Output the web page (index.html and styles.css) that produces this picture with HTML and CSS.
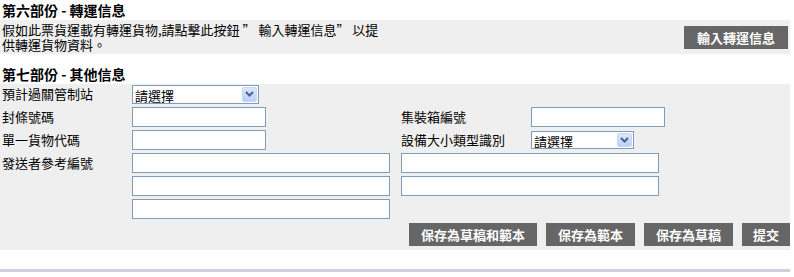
FILE: index.html
```html
<!DOCTYPE HTML>
<html lang="zh-Hant">
<head>
<meta name="viewport" content="width=device-width, initial-scale=1">
<title>其他信息</title>
<link rel="stylesheet" href="styles.css">
</head>
<body>

<div class="page">
  <h2 class="part-title">第六部份 - 轉運信息</h2>
  <div class="panel transit">
    <p class="transit-note">假如此票貨運載有轉運貨物,請點擊此按鈕 ” 輸入轉運信息” 以提供轉運貨物資料。</p>
    <button class="btn btn-transit">輸入轉運信息</button>
  </div>

  <h2 class="part-title spaced">第七部份 - 其他信息</h2>
  <div class="panel other">
    <div class="form-grid">
      <label class="lbl">預計過關管制站</label>
      <span class="pick-wrap pick-office">
        <select class="pick"><option>請選擇</option></select>
        <span class="pick-arrow"><svg width="9" height="6" viewBox="0 0 9 6"><path d="M1 1 L4.5 4.5 L8 1" fill="none" stroke="#4d6185" stroke-width="2"/></svg></span>
      </span>

      <label class="lbl">封條號碼</label>
      <input class="field" type="text">
      <label class="lbl col-3">集裝箱編號</label>
      <input class="field col-4" type="text">

      <label class="lbl">單一貨物代碼</label>
      <input class="field" type="text">
      <label class="lbl col-3">設備大小類型識別</label>
      <span class="pick-wrap pick-size">
        <select class="pick"><option>請選擇</option></select>
        <span class="pick-arrow"><svg width="9" height="6" viewBox="0 0 9 6"><path d="M1 1 L4.5 4.5 L8 1" fill="none" stroke="#4d6185" stroke-width="2"/></svg></span>
      </span>

      <label class="lbl">發送者參考編號</label>
      <input class="field field-wide" type="text">
      <input class="field field-wide col-34" type="text">

      <input class="field field-wide" type="text">
      <input class="field field-wide col-34" type="text">

      <input class="field field-wide" type="text">
    </div>

    <div class="actions">
      <button class="btn">保存為草稿和範本</button>
      <button class="btn">保存為範本</button>
      <button class="btn">保存為草稿</button>
      <button class="btn btn-submit">提交</button>
    </div>
  </div>

  <div class="bottom-rule"></div>
</div>

</body>
</html>
```

FILE: styles.css
```css
/* Page base */
body {
  margin: 0;
  padding: 0;
  background: #ffffff;
  color: #000000;
  font-family: "Noto Sans CJK TC", "Liberation Sans", sans-serif;
  font-size: 13px;
}

.page {
  width: 790px;
}

/* Section titles */
.part-title {
  margin: 0;
  padding-left: 2px;
  font-size: 14px;
  font-weight: bold;
  line-height: 20px;
}

.part-title.spaced {
  margin-top: 10px;
}

/* Grey panels */
.panel {
  background: #efefef;
}

.transit {
  display: flex;
  justify-content: space-between;
  align-items: center;
  height: 34px;
  padding: 0 2px;
}

.transit-note {
  margin: 0;
  width: 378px;
  line-height: 15px;
}

.other {
  padding-bottom: 4px;
}

/* Form grid: label / field / label / field */
.form-grid {
  display: grid;
  grid-template-columns: 130px 269px 130px 1fr;
  grid-auto-rows: 20px;
  row-gap: 3px;
  padding-left: 2px;
}

.lbl {
  grid-column: 1;
  line-height: 19px;
  align-self: start;
}

.field {
  box-sizing: border-box;
  grid-column: 2;
  width: 134px;
  height: 20px;
  margin: 0;
  padding: 0 2px;
  border: 1px solid #7f9db9;
  background: #ffffff;
  font: inherit;
}

.field-wide {
  width: 258px;
}

.form-grid .col-3 { grid-column: 3; }
.form-grid .col-4 { grid-column: 4; }
.form-grid .col-34 { grid-column: 3 / span 2; }

/* XP style drop-down */
.pick-wrap {
  position: relative;
  display: block;
}

.pick {
  box-sizing: border-box;
  width: 100%;
  height: 100%;
  margin: 0;
  padding: 0 0 0 2px;
  border: 1px solid #7f9db9;
  border-radius: 0;
  background: #ffffff;
  appearance: none;
  -webkit-appearance: none;
  font-family: inherit;
  font-size: 13px;
  color: #000000;
  outline: none;
}

.pick-office {
  grid-column: 2;
  width: 127px;
  height: 19px;
  align-self: center;
}

.pick-size {
  grid-column: 4;
  width: 103px;
  height: 18px;
  margin-top: 1px;
}

.pick-arrow {
  position: absolute;
  top: 2px;
  right: 2px;
  bottom: 2px;
  width: 15px;
  box-sizing: border-box;
  display: flex;
  align-items: center;
  justify-content: center;
  background: linear-gradient(180deg, #dce6fd, #bccffa);
  border: 1px solid #c6d5f8;
  border-radius: 2px;
  pointer-events: none;
}

/* Dark grey buttons */
.btn {
  height: 23px;
  margin: 0;
  padding: 0 12px;
  border: none;
  background: #666666;
  color: #ffffff;
  font-family: inherit;
  font-size: 13px;
  font-weight: bold;
  cursor: pointer;
}

.btn-transit {
  padding: 0 13px;
}

.btn-submit {
  padding: 0 11px;
}

.actions {
  display: flex;
  justify-content: flex-end;
  gap: 9px;
  margin-top: 4px;
}

/* Footer line */
.bottom-rule {
  height: 3px;
  margin-top: 19px;
  background: #cdcfdd;
}
```
